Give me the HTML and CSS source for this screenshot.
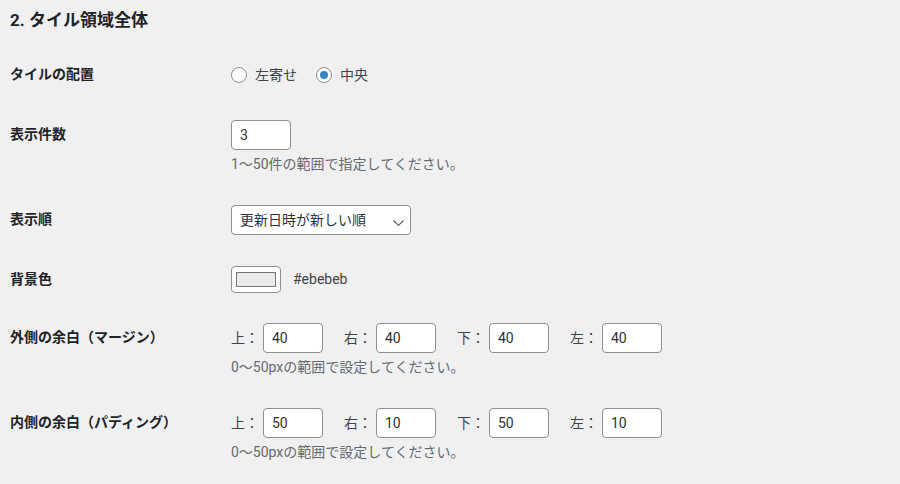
FILE: index.html
```html
<!DOCTYPE html>
<html lang="ja">
<head>
<meta charset="utf-8">
<title>タイル領域全体</title>
<link rel="stylesheet" href="styles.css">
</head>
<body>
<div class="wrap">
  <h2 class="title">2. タイル領域全体</h2>
  <div class="form">
    <div class="th">タイルの配置</div>
    <div class="td">
      <div class="radios">
        <label class="radio"><input type="radio" name="align">左寄せ</label>
        <label class="radio"><input type="radio" name="align" checked>中央</label>
      </div>
    </div>

    <div class="th">表示件数</div>
    <div class="td">
      <input class="num" type="text" value="3">
      <p class="desc">1〜50件の範囲で指定してください。</p>
    </div>

    <div class="th">表示順</div>
    <div class="td">
      <div class="select-wrap">
        <select class="select"><option>更新日時が新しい順</option></select>
        <svg class="chev" width="11" height="6" viewBox="0 0 11 6"><path d="M0.5 0.5 L5.5 5.3 L10.5 0.5" fill="none" stroke="#50575e" stroke-width="1.1"/></svg>
      </div>
    </div>

    <div class="th">背景色</div>
    <div class="td">
      <div class="color-row">
        <span class="color-btn"><span class="swatch"></span></span>
        <span class="color-val">#ebebeb</span>
      </div>
    </div>

    <div class="th">外側の余白（マージン）</div>
    <div class="td">
      <div class="sides">
        <label class="side"><span class="side-label">上：</span><input class="num" type="text" value="40"></label>
        <label class="side"><span class="side-label">右：</span><input class="num" type="text" value="40"></label>
        <label class="side"><span class="side-label">下：</span><input class="num" type="text" value="40"></label>
        <label class="side"><span class="side-label">左：</span><input class="num" type="text" value="40"></label>
      </div>
      <p class="desc">0〜50pxの範囲で設定してください。</p>
    </div>

    <div class="th">内側の余白（パディング）</div>
    <div class="td">
      <div class="sides">
        <label class="side"><span class="side-label">上：</span><input class="num" type="text" value="50"></label>
        <label class="side"><span class="side-label">右：</span><input class="num" type="text" value="10"></label>
        <label class="side"><span class="side-label">下：</span><input class="num" type="text" value="50"></label>
        <label class="side"><span class="side-label">左：</span><input class="num" type="text" value="10"></label>
      </div>
      <p class="desc">0〜50pxの範囲で設定してください。</p>
    </div>
  </div>
</div>
</body>
</html>
```

FILE: styles.css
```css
html, body {
  margin: 0;
  padding: 0;
  background: #f0f0f1;
}

body {
  font-family: Roboto, "Noto Sans CJK JP", sans-serif;
  font-size: 14px;
  color: #3c434a;
}

.wrap {
  padding-left: 10px;
}

.title {
  margin: 7px 0 12px;
  font-size: 17px;
  line-height: 26px;
  font-weight: 700;
  color: #1d2327;
}

.form {
  display: grid;
  grid-template-columns: 211px 1fr;
}

.th {
  align-self: start;
  padding: 20px 0;
  font-size: 14px;
  line-height: 18.2px;
  font-weight: 700;
  color: #1d2327;
}

.td {
  align-self: center;
  padding: 15px 0 15px 10px;
  line-height: 1.3;
}

.radios {
  display: flex;
  align-items: center;
  min-height: 30px;
  line-height: 21px;
}

.radio {
  display: flex;
  align-items: center;
  margin-right: 19px;
}

.radio input {
  appearance: none;
  -webkit-appearance: none;
  box-sizing: border-box;
  width: 16px;
  height: 16px;
  margin: 0 8px 0 0;
  border: 1px solid #8c8f94;
  border-radius: 50%;
  background: #fff;
  display: flex;
  align-items: center;
  justify-content: center;
}

.radio input:checked::before {
  content: "";
  width: 8px;
  height: 8px;
  border-radius: 50%;
  background: #3582c4;
}

.num {
  box-sizing: border-box;
  width: 60px;
  height: 30px;
  margin: 0;
  padding: 0 8px;
  border: 1px solid #8c8f94;
  border-radius: 4px;
  background: #fff;
  font-family: Roboto, "Noto Sans CJK JP", sans-serif;
  font-size: 14px;
  color: #2c3338;
  display: block;
  outline: none;
}

.desc {
  margin: 4px 0 0;
  font-size: 14px;
  line-height: 21px;
  color: #646970;
}

.select-wrap {
  position: relative;
  width: 180px;
}

.select {
  appearance: none;
  -webkit-appearance: none;
  box-sizing: border-box;
  display: block;
  width: 180px;
  height: 30px;
  margin: 0;
  padding: 0 24px 0 8px;
  border: 1px solid #8c8f94;
  border-radius: 4px;
  background: #fff;
  font-family: Roboto, "Noto Sans CJK JP", sans-serif;
  font-size: 14px;
  color: #2c3338;
}

.chev {
  position: absolute;
  right: 7px;
  top: 15px;
  pointer-events: none;
}

.color-row {
  display: flex;
  align-items: center;
}

.color-btn {
  box-sizing: border-box;
  width: 50px;
  height: 27px;
  border: 1px solid #8c8f94;
  border-radius: 4px;
  background: #fff;
  display: flex;
  align-items: center;
  justify-content: center;
}

.swatch {
  box-sizing: border-box;
  width: 40px;
  height: 15px;
  border: 1px solid #767676;
  background: #ebebeb;
}

.color-val {
  margin-left: 12px;
  color: #3c434a;
  line-height: 21px;
}

.sides {
  display: flex;
  align-items: center;
}

.side {
  display: flex;
  align-items: center;
}

.side + .side {
  margin-left: 21px;
}

.side-label {
  width: 28px;
  margin-right: 4px;
  line-height: 21px;
  color: #3c434a;
}
```
